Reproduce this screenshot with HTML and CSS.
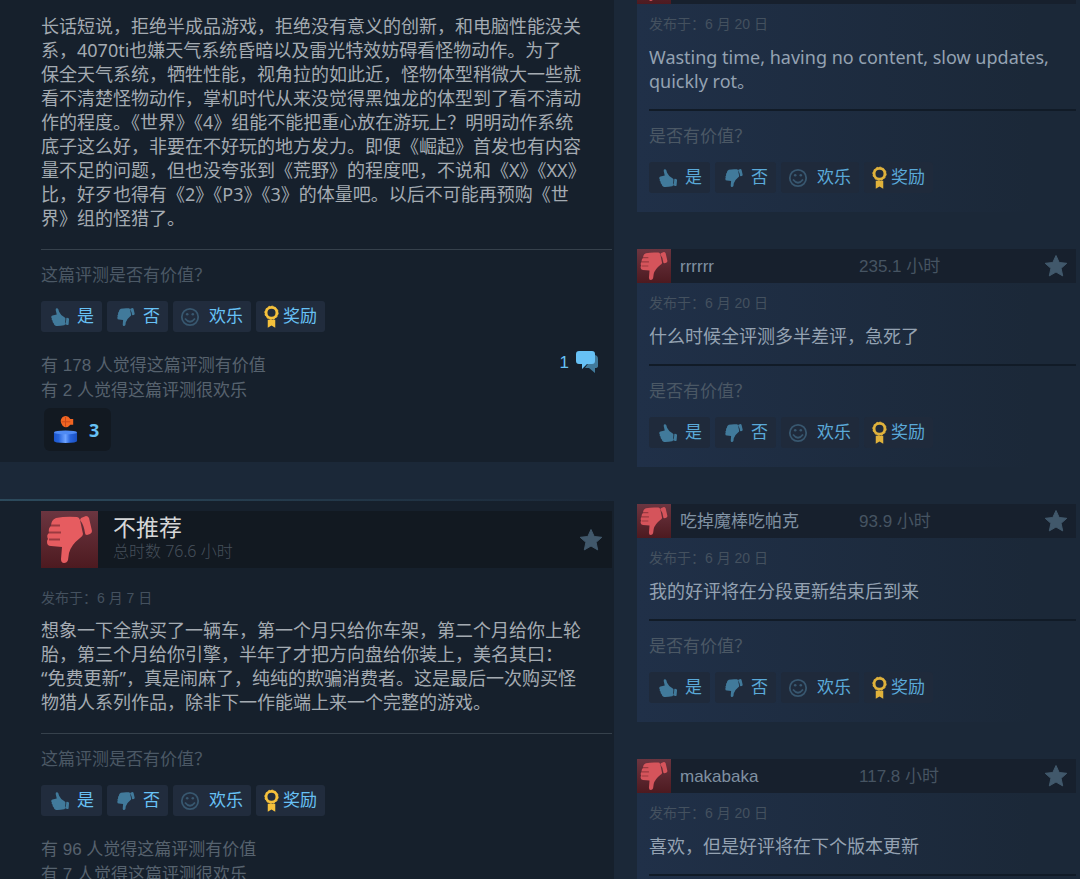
FILE: index.html
```html
<!DOCTYPE html>
<html lang="zh-CN">
<head>
<meta charset="utf-8">
<title>用户评测</title>
<link rel="stylesheet" href="styles.css">
</head>
<body>
<svg class="sprite" aria-hidden="true">
  <symbol id="hand" viewBox="0 0 57 57">
    <path fill="currentColor" d="M15 7 Q25 5 36 6 Q38 6 39 9 L42 23 Q42 25 39 27 Q30 34 28 42 L27 49 Q26 52 23 52 Q20 52 20 48 L21 36 L10 35 Q6 35 6 31 Q6 29 7 28 Q5 24 8 22 Q7 17 10 15 Q10 9 15 7Z"/>
    <path fill="currentColor" d="M40 7 L45 5 Q47 5 48 7 L51 20 Q51 22 49 23 L46 24 Q44 24 44 22 Q43 14 39 9Z"/>
  </symbol>
  <symbol id="creases" viewBox="0 0 57 57"><path fill="none" stroke="#9b3a40" stroke-width="2" d="M10 14.500H19M8 21.500H20M8 28.500H19"/></symbol>
  <symbol id="star" viewBox="0 0 24 24"><path fill="currentColor" stroke="currentColor" stroke-width="1" stroke-linejoin="round" d="M12 1.500l3.200 7 7.600.8-5.700 5 1.600 7.600L12 18l-6.700 3.900L6.900 14.300l-5.700-5 7.600-.8z"/></symbol>
  <symbol id="smile" viewBox="0 0 20 20"><g fill="none" stroke="currentColor" stroke-width="1.800"><circle cx="10" cy="10" r="8.200"/><path d="M5 11.500Q10 18 15 11.500"/></g><circle cx="7.200" cy="7.200" r="1.300" fill="currentColor"/><circle cx="12.800" cy="7.200" r="1.300" fill="currentColor"/></symbol>
  <symbol id="medal" viewBox="0 0 16 24"><circle cx="8" cy="8" r="5.800" fill="none" stroke="#f5c13c" stroke-width="3"/><circle cx="8" cy="8" r="7.100" fill="none" stroke="#f5c13c" stroke-width="1" stroke-dasharray="2 1.700"/><path fill="#f5c13c" d="M4 15.500h8V24l-4-2.500L4 24z"/></symbol>
</svg>

<div class="page">
  <main class="main">
    <article class="review">
      <p class="text">长话短说，拒绝半成品游戏，拒绝没有意义的创新，和电脑性能没关<br>系，4070ti也嫌天气系统昏暗以及雷光特效妨碍看怪物动作。为了<br>保全天气系统，牺牲性能，视角拉的如此近，怪物体型稍微大一些就<br>看不清楚怪物动作，掌机时代从来没觉得黑蚀龙的体型到了看不清动<br>作的程度。《世界》《4》组能不能把重心放在游玩上？明明动作系统<br>底子这么好，非要在不好玩的地方发力。即便《崛起》首发也有内容<br>量不足的问题，但也没夸张到《荒野》的程度吧，不说和《X》《XX》<br>比，好歹也得有《2》《P3》《3》的体量吧。以后不可能再预购《世<br>界》组的怪猎了。</p>
      <hr class="rule">
      <p class="ask">这篇评测是否有价值？</p>
      <div class="votes">
        <button class="vote"><svg class="hand up"><use href="#hand"/></svg>是</button>
        <button class="vote"><svg class="hand"><use href="#hand"/></svg>否</button>
        <button class="vote fun"><svg class="smile"><use href="#smile"/></svg>欢乐</button>
        <button class="vote prize"><svg class="medal"><use href="#medal"/></svg>奖励</button>
      </div>
      <div class="stats">
        <p>有 178 人觉得这篇评测有价值<br>有 2 人觉得这篇评测很欢乐</p>
        <a class="comments" href="#comments">1
          <svg class="bubble" viewBox="0 0 22 24"><path fill="#417a9b" d="M18 5q4 0 4 4v7q0 2-3 2v5l-6-5H9z"/><path fill="#67c1f5" d="M3 1h13q3 0 3 3v7q0 3-3 3h-5l-5 5v-5H3q-3 0-3-3V4q0-3 3-3z"/></svg>
        </a>
      </div>
      <button class="award">
        <svg class="award-art" viewBox="0 0 26 30">
          <defs><linearGradient id="can"><stop offset="0" stop-color="#1c55cc"/><stop offset=".2" stop-color="#2563dc"/><stop offset=".5" stop-color="#6da2ff"/><stop offset=".7" stop-color="#2865df"/><stop offset="1" stop-color="#1a4fc0"/></linearGradient></defs>
          <path fill="#f26522" d="M10 2q5-3 8 2l3 0v6l-3 0q-4 5-8 1-4-5 0-9z"/><path stroke="#c9481a" fill="none" d="M9 7h9M13 2v10"/>
          <path fill="url(#can)" d="M1 18h24v9q0 2-12 2T1 27z"/><ellipse cx="13" cy="18" rx="12" ry="2" fill="#4f8af4"/>
        </svg>3
      </button>
    </article>

    <article class="review second">
      <header class="verdict">
        <svg class="badge"><use href="#hand"/><use href="#creases"/></svg>
        <div class="verdict-text"><h2>不推荐</h2><p>总时数 76.6 小时</p></div>
        <svg class="star"><use href="#star"/></svg>
      </header>
      <p class="date">发布于：6 月 7 日</p>
      <p class="text">想象一下全款买了一辆车，第一个月只给你车架，第二个月给你上轮<br>胎，第三个月给你引擎，半年了才把方向盘给你装上，美名其曰：<br>“免费更新”，真是闹麻了，纯纯的欺骗消费者。这是最后一次购买怪<br>物猎人系列作品，除非下一作能端上来一个完整的游戏。</p>
      <hr class="rule">
      <p class="ask">这篇评测是否有价值？</p>
      <div class="votes">
        <button class="vote"><svg class="hand up"><use href="#hand"/></svg>是</button>
        <button class="vote"><svg class="hand"><use href="#hand"/></svg>否</button>
        <button class="vote fun"><svg class="smile"><use href="#smile"/></svg>欢乐</button>
        <button class="vote prize"><svg class="medal"><use href="#medal"/></svg>奖励</button>
      </div>
      <div class="stats"><p>有 96 人觉得这篇评测有价值<br>有 7 人觉得这篇评测很欢乐</p></div>
    </article>
  </main>

  <aside class="recent">
    <article class="short">
      <header class="bar"><svg class="badge"><use href="#hand"/><use href="#creases"/></svg></header>
      <p class="date">发布于：6 月 20 日</p>
      <p class="text">Wasting time, having no content, slow updates,<br>quickly rot。</p>
      <hr class="rule">
      <p class="ask">是否有价值？</p>
      <div class="votes">
        <button class="vote"><svg class="hand up"><use href="#hand"/></svg>是</button>
        <button class="vote"><svg class="hand"><use href="#hand"/></svg>否</button>
        <button class="vote fun"><svg class="smile"><use href="#smile"/></svg>欢乐</button>
        <button class="vote prize"><svg class="medal"><use href="#medal"/></svg>奖励</button>
      </div>
    </article>
    <article class="short">
      <header class="bar"><svg class="badge"><use href="#hand"/><use href="#creases"/></svg><a class="name" href="#user">rrrrrr</a><span class="hours">235.1 小时</span><svg class="star"><use href="#star"/></svg></header>
      <p class="date">发布于：6 月 20 日</p>
      <p class="text">什么时候全评测多半差评，急死了</p>
      <hr class="rule">
      <p class="ask">是否有价值？</p>
      <div class="votes">
        <button class="vote"><svg class="hand up"><use href="#hand"/></svg>是</button>
        <button class="vote"><svg class="hand"><use href="#hand"/></svg>否</button>
        <button class="vote fun"><svg class="smile"><use href="#smile"/></svg>欢乐</button>
        <button class="vote prize"><svg class="medal"><use href="#medal"/></svg>奖励</button>
      </div>
    </article>
    <article class="short">
      <header class="bar"><svg class="badge"><use href="#hand"/><use href="#creases"/></svg><a class="name" href="#user">吃掉魔棒吃帕克</a><span class="hours">93.9 小时</span><svg class="star"><use href="#star"/></svg></header>
      <p class="date">发布于：6 月 20 日</p>
      <p class="text">我的好评将在分段更新结束后到来</p>
      <hr class="rule">
      <p class="ask">是否有价值？</p>
      <div class="votes">
        <button class="vote"><svg class="hand up"><use href="#hand"/></svg>是</button>
        <button class="vote"><svg class="hand"><use href="#hand"/></svg>否</button>
        <button class="vote fun"><svg class="smile"><use href="#smile"/></svg>欢乐</button>
        <button class="vote prize"><svg class="medal"><use href="#medal"/></svg>奖励</button>
      </div>
    </article>
    <article class="short">
      <header class="bar"><svg class="badge"><use href="#hand"/><use href="#creases"/></svg><a class="name" href="#user">makabaka</a><span class="hours">117.8 小时</span><svg class="star"><use href="#star"/></svg></header>
      <p class="date">发布于：6 月 20 日</p>
      <p class="text">喜欢，但是好评将在下个版本更新</p>
      <hr class="rule">
    </article>
  </aside>
</div>
</body>
</html>
```

FILE: styles.css
```css
* { box-sizing: border-box; margin: 0; padding: 0; }
body {
  height: 100vh;
  overflow: hidden;
  background: #1b2838;
  color: #a4abb2;
  font: 17px/25px "Liberation Sans", "Noto Sans CJK SC", sans-serif;
}
.sprite { display: none; }
.page {
  display: grid;
  grid-template-columns: minmax(0, 614fr) minmax(0, 439fr);
  column-gap: 23px;
  padding-right: 4px;
}

/* Helpful reviews column */
.review { padding: 14px 2px 11px 41px; background: #16202c; }
.second {
  margin-top: 37px;
  padding-top: 10px;
  border-top: 2px solid;
  border-image: linear-gradient(to right, #2c4a5c, #1b2838) 1;
}
.text {
  font: 18px/24px "Noto Sans", "Noto Sans CJK SC", sans-serif;
  white-space: nowrap;
}
.rule { height: 1px; border: 0; background: #36414c; }
.review .rule { margin: 19px 0 13px; }
.ask { color: #4b5865; }
.votes { display: flex; gap: 5px; margin-top: 13px; }
.vote {
  display: flex;
  align-items: center;
  height: 31px;
  padding: 0 8px;
  gap: 6px;
  border: 0;
  border-radius: 3px;
  background: #212c3d;
  color: #67c1f5;
  font: 17px/25px "Liberation Sans", "Noto Sans CJK SC", sans-serif;
}
.hand { width: 22px; height: 22px; color: #417a9b; }
.hand.up { transform: scaleY(-1) rotate(8deg); }
.smile { width: 20px; height: 20px; color: #38576f; }
.fun { gap: 9px; padding-left: 7px; }
.medal { width: 15px; height: 23px; }
.prize { gap: 4px; padding-left: 8px; }
.stats { display: flex; justify-content: space-between; margin-top: 21px; color: #56626e; }
.comments { display: flex; gap: 7px; height: 25px; margin-top: -3px; padding-right: 14px; color: #67c1f5; text-decoration: none; }
.bubble { width: 22px; height: 24px; }
.award {
  display: flex;
  align-items: center;
  gap: 11px;
  height: 43px;
  margin: 5px 0 0 3px;
  padding: 0 12px 0 9px;
  border: 0;
  border-radius: 6px;
  background: #121921;
  color: #67c1f5;
  font: bold 18px "Noto Sans", sans-serif;
}
.award-art { width: 25px; height: 29px; }

.badge { flex: none; width: 57px; height: 57px; background: linear-gradient(#6b3540, #4d1a20); color: #e65c60; }
.star { width: 24px; height: 24px; color: #41586b; }
.verdict { display: flex; align-items: center; background: #121921; }
.verdict-text { flex: 1; padding: 0 0 5px 15px; }
.verdict h2 { color: #d6d7d8; font: 23px/28px "Noto Sans", "Noto Sans CJK SC", sans-serif; }
.verdict p { color: #46505b; font: 300 16px/20px "Noto Sans", "Noto Sans CJK SC", sans-serif; }
.verdict .star { margin-right: 9px; }
.date { color: #44515f; font-size: 14px; line-height: 20px; }
.second .date { margin: 20px 0 10px; }

/* Recently posted column */
.recent { display: flex; flex-direction: column; gap: 37px; margin-top: -30px; }
.short {
  padding-bottom: 19px;
  background: linear-gradient(to right, #203048, #1b2838 90%);
}
.short > :not(.bar) { margin-left: 12px; }
.bar { display: flex; align-items: center; height: 34px; margin-bottom: 10px; padding-right: 8px; background: #17202d; }
.bar .badge { width: 34px; height: 34px; color: #d5545b; }
.name { flex: 0 0 188px; padding-left: 9px; color: #8091a2; text-decoration: none; }
.hours { flex: 1; color: #465462; }
.short .date { margin-bottom: 11px; }
.short .text { color: #94a2b2; }
.short .rule { height: 2px; margin-top: 16px; margin-bottom: 13px; background: #111b27; }
.short .vote { background: #1f2a3b; color: #5aa9d8; }
.short .medal { opacity: .9; }
```
